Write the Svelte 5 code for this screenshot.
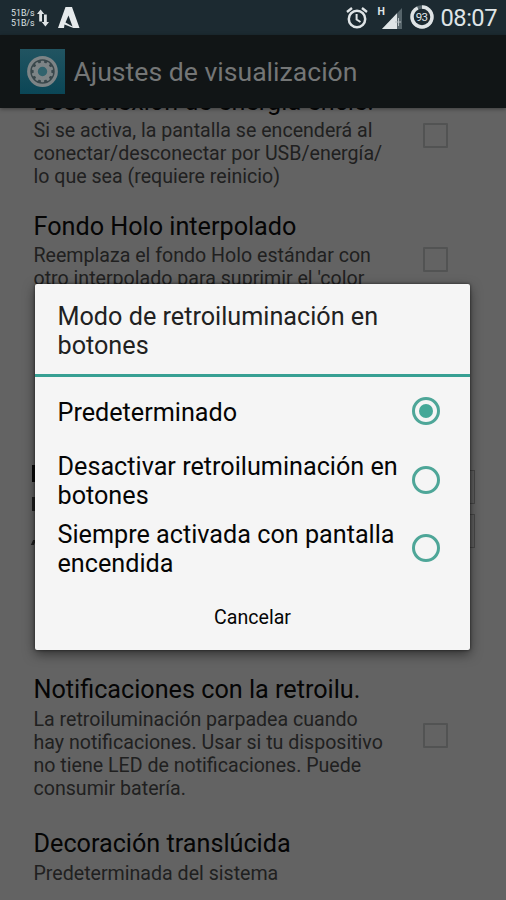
<script lang="ts">
    interface Setting {
        id: string;
        title: string;
        summary: string;
        checkbox: boolean;
    }

    const settings: Setting[] = [
        {
            id: 'power',
            title: 'Desconexión de energía encie.',
            summary: 'Si se activa, la pantalla se encenderá al\nconectar/desconectar por USB/energía/\nlo que sea (requiere reinicio)',
            checkbox: true
        },
        {
            id: 'holo',
            title: 'Fondo Holo interpolado',
            summary: "Reemplaza el fondo Holo estándar con\notro interpolado para suprimir el 'color",
            checkbox: true
        },
        {
            id: 'notifications',
            title: 'Notificaciones con la retroilu.',
            summary: 'La retroiluminación parpadea cuando\nhay notificaciones. Usar si tu dispositivo\nno tiene LED de notificaciones. Puede\nconsumir batería.',
            checkbox: true
        },
        {
            id: 'decoration',
            title: 'Decoración translúcida',
            summary: 'Predeterminada del sistema',
            checkbox: false
        }
    ];

    const options = [
        'Predeterminado',
        'Desactivar retroiluminación en\nbotones',
        'Siempre activada con pantalla\nencendida'
    ];

    let selected = $state(0);

    // teeth of the settings gear
    const teeth = Array.from({ length: 10 }, (_, i) => i * 36);
</script>

<div class="screen">
    <header class="status-bar">
        <div class="speed">
            <span>51B/s</span>
            <span>51B/s</span>
        </div>
        <svg class="arrows" width="12" height="18" viewBox="0 0 12 18">
            <path d="M3.6 0.5L7.2 5H5V12.5H2.2V5H0Z M8.4 17.5L4.8 13H7V5.5H9.8V13H12Z" fill="#dfe4e6" />
        </svg>
        <svg class="launcher" width="22" height="22" viewBox="0 0 22 22">
            <path fill-rule="evenodd" d="M7.5 0H14L21.5 21H15.5L6.5 17.5L6 21H0Z M10.5 8.5L7.5 15.5L14.5 19.5Z" fill="#e6eaec" />
        </svg>
        <svg class="alarm" width="22" height="22" viewBox="0 0 22 22">
            <circle cx="11" cy="12" r="8.2" fill="none" stroke="#dfe4e6" stroke-width="2.5" />
            <path d="M1 5L6 1M21 5L16 1" stroke="#dfe4e6" stroke-width="2.4" />
            <path d="M10.6 7V12.5L14.5 15" fill="none" stroke="#dfe4e6" stroke-width="2" />
        </svg>
        <div class="signal">
            <span>H</span>
            <svg width="20" height="21" viewBox="0 0 20 21">
                <path d="M20 0V21H0Z" fill="#56646a" />
                <path d="M15 5.3V21H0Z" fill="#dfe4e6" />
                <path d="M13 14H19M16.5 10V18" stroke="#b9c1c4" stroke-width="1" />
            </svg>
        </div>
        <div class="battery">
            <svg width="24" height="24" viewBox="0 0 24 24">
                <circle cx="12" cy="12" r="10" fill="none" stroke="#56646a" stroke-width="3.4" />
                <circle cx="12" cy="12" r="10" fill="none" stroke="#dfe4e6" stroke-width="3.4" pathLength="100" stroke-dasharray="93 7" transform="rotate(-90 12 12)" />
            </svg>
            <span>93</span>
        </div>
        <span class="clock">08:07</span>
    </header>

    <div class="action-bar">
        <div class="app-icon">
            <svg width="31" height="31" viewBox="-15.5 -15.5 31 31">
                <circle r="13.8" fill="#39474b" stroke="#7d8486" stroke-width="3.2" />
                {#each teeth as angle}
                    <rect x="-1.7" y="-10.8" width="3.4" height="5" rx="1" fill="#7d8486" transform="rotate({angle})" />
                {/each}
                <circle r="6.8" fill="#31636d" stroke="#7d8486" stroke-width="4.2" />
            </svg>
        </div>
        <h1>Ajustes de visualización</h1>
    </div>

    <main>
        {#each settings as setting (setting.id)}
            {#if setting.id === 'notifications'}
                <section class="covered">
                    <div class="covered-text">
                        <i></i>
                        <i></i>
                        <i></i>
                    </div>
                    <div class="covered-controls">
                        <i></i>
                        <i></i>
                    </div>
                </section>
            {/if}
            <section class="setting {setting.id}">
                <div class="setting-text">
                    <h2>{setting.title}</h2>
                    <p>{setting.summary}</p>
                </div>
                {#if setting.checkbox}
                    <i class="checkbox"></i>
                {/if}
            </section>
        {/each}
    </main>

    <div class="dialog" role="dialog">
        <h2 class="dialog-title">Modo de retroiluminación en botones</h2>
        <div class="options">
            {#each options as option, index}
                <button class="option" onclick={() => (selected = index)}>
                    <span>{option}</span>
                    <i class="radio" class:checked={selected === index}></i>
                </button>
            {/each}
        </div>
        <button class="cancel">Cancelar</button>
    </div>
</div>

<style>
    :global(body) {
        background: #636363;
    }

    .screen {
        position: relative;
        height: 900px;
        overflow: hidden;
        display: flex;
        flex-direction: column;
        background: #636363;
        font-family: Roboto, 'Liberation Sans', sans-serif;
    }

    h1, h2, p {
        margin: 0;
        font-weight: 400;
    }

    svg {
        display: block;
    }

    .status-bar {
        height: 35px;
        flex: none;
        display: flex;
        align-items: center;
        padding: 0 9px 0 11px;
        background: #1c2a31;
        color: #dfe4e6;
    }

    .speed {
        display: flex;
        flex-direction: column;
        font-size: 8.8px;
        line-height: 10px;
        width: 26px;
    }

    .launcher {
        margin-left: 9px;
    }

    .alarm {
        margin-left: auto;
    }

    .signal {
        display: flex;
        margin: -3px 0 0 10px;
    }

    .signal span {
        font-size: 10.5px;
        line-height: 14px;
        width: 7px;
        font-weight: 700;
        margin: 1px -3px 0 0;
    }

    .signal svg {
        margin-top: 4px;
    }

    .battery {
        display: grid;
        place-items: center;
        margin: -1px 0 0 8px;
    }

    .battery svg, .battery span {
        grid-area: 1 / 1;
    }

    .battery span {
        font-size: 11.5px;
        line-height: 12px;
        letter-spacing: -0.7px;
    }

    .clock {
        font-size: 23.7px;
        letter-spacing: -0.5px;
        margin: 1px 0 0 7px;
    }

    .action-bar {
        height: 73px;
        flex: none;
        display: flex;
        align-items: center;
        padding-left: 20px;
        box-sizing: border-box;
        background: #111516;
        box-shadow: 0 1px 4px rgba(0, 0, 0, 0.4);
    }

    .app-icon {
        width: 45px;
        height: 45px;
        display: grid;
        place-items: center;
        background: linear-gradient(#215461, #0b4656);
    }

    .action-bar h1 {
        font-size: 26.6px;
        margin: 0 0 0 8.5px;
        color: #747676;
    }

    main {
        flex: 1;
        min-height: 0;
        overflow: hidden;
        padding: 0 58px 0 33.5px;
    }

    .setting {
        display: flex;
        justify-content: space-between;
        align-items: center;
    }

    .setting h2 {
        font-size: 25.2px;
        line-height: 30px;
        color: #050505;
        white-space: nowrap;
    }

    .setting p {
        margin-top: 2px;
        font-size: 19.6px;
        line-height: 23px;
        color: #202020;
        white-space: pre;
    }

    .power {
        margin-top: -21px;
        height: 101px;
    }

    .power .checkbox, .notifications .checkbox {
        margin-bottom: 4px;
    }

    .holo {
        margin-top: 24px;
        height: 100px;
        align-items: flex-start;
    }

    .holo .checkbox {
        margin-top: 35px;
    }

    .notifications {
        height: 125px;
    }

    .notifications p, .decoration p {
        margin-top: 3px;
    }

    .decoration {
        margin-top: 29px;
    }

    .checkbox {
        width: 21px;
        height: 21px;
        flex: none;
        border: 2px solid #525353;
        border-radius: 1px;
    }

    /* row that lies behind the dialog, only its edges show */
    .covered {
        display: flex;
        justify-content: space-between;
        height: 215px;
        margin: 148px -27px 0 -2.5px;
    }

    .covered-text {
        display: flex;
        flex-direction: column;
        gap: 15px;
        padding-top: 5px;
    }

    .covered-text i {
        width: 3px;
        height: 17px;
        margin-left: 1px;
        background: #0a0a0a;
    }

    .covered-text i:nth-child(2) {
        height: 14px;
        background: #202020;
    }

    .covered-text i:nth-child(3) {
        height: 5px;
        margin: 14px 0 0 1px;
        background: #202020;
        transform: skewX(-25deg);
    }

    .covered-controls {
        display: flex;
        flex-direction: column;
        gap: 10px;
        padding-top: 10px;
    }

    .covered-controls i {
        width: 60px;
        height: 34px;
        box-sizing: border-box;
        border: 1px solid #484848;
        background: #5e5e5e;
    }

    .dialog {
        position: absolute;
        left: 35px;
        top: 284px;
        width: 435px;
        height: 366px;
        display: flex;
        flex-direction: column;
        background: #f5f5f5;
        border-radius: 2px;
        box-shadow: 0 4px 12px rgba(0, 0, 0, 0.5), 0 0 3px rgba(0, 0, 0, 0.6);
    }

    .dialog-title {
        height: 93px;
        box-sizing: border-box;
        padding: 19px 60px 0 22.5px;
        border-bottom: 3px solid #37a093;
        font-size: 25.2px;
        line-height: 28.5px;
        color: #212121;
    }

    button {
        border: 0;
        padding: 0;
        background: none;
        font-family: inherit;
        color: #050505;
        cursor: pointer;
    }

    .option {
        display: flex;
        width: 100%;
        height: 68.4px;
        align-items: center;
        justify-content: space-between;
        padding: 0 30.5px 0 22.5px;
        text-align: left;
        font-size: 25.2px;
        line-height: 29.2px;
        white-space: pre;
    }

    .option span {
        margin-top: 3px;
    }

    .radio {
        width: 28px;
        height: 28px;
        flex: none;
        box-sizing: border-box;
        display: grid;
        place-items: center;
        border: 3px solid #4ea698;
        border-radius: 50%;
    }

    .radio.checked::after {
        content: '';
        width: 14px;
        height: 14px;
        border-radius: 50%;
        background: #45a898;
    }

    .cancel {
        flex: 1;
        padding-top: 2px;
        font-size: 19.6px;
    }
</style>
